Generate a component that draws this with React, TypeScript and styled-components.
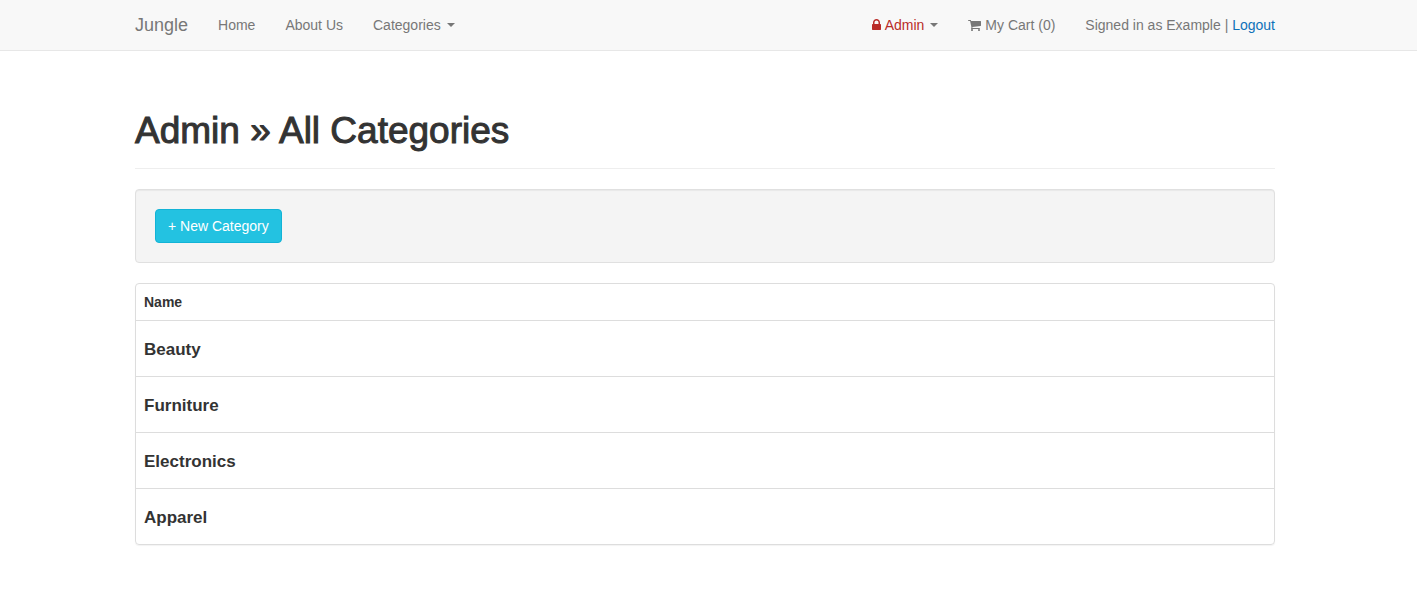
import React from "react";
import styled, { createGlobalStyle } from "styled-components";

const GlobalStyle = createGlobalStyle`
  *, *::before, *::after { box-sizing: border-box; }
  body {
    margin: 0;
    background: #fff;
    color: #333;
    font: 14px/20px "Liberation Sans", Arial, sans-serif;
  }
`;

const Navbar = styled.header`
  padding-right: 7px;
  background: #f8f8f8;
  border-bottom: 1px solid #e7e7e7;
`;

const Container = styled.div`
  max-width: 1170px;
  margin: 0 auto;
  padding: 0 15px;
`;

const NavRow = styled(Container)`
  display: flex;
  align-items: center;
  justify-content: space-between;
  min-height: 50px;
  color: #777;
`;

const NavGroup = styled.nav`
  display: flex;
  align-items: center;
  gap: 30px;
`;

const Brand = styled.a`
  color: #777;
  font-size: 18px;
  text-decoration: none;
`;

const NavLink = styled.a`
  display: inline-flex;
  align-items: center;
  gap: 4px;
  color: #777;
  text-decoration: none;
`;

const NavToggle = styled.button<{ $danger?: boolean }>`
  display: inline-flex;
  align-items: center;
  gap: 4px;
  padding: 0;
  border: 0;
  background: none;
  color: ${(p) => (p.$danger ? "#b92c28" : "#777")};
  font: inherit;
  cursor: pointer;
`;

const Caret = styled.span`
  margin-left: 2px;
  border-top: 4px solid #777;
  border-left: 4px solid transparent;
  border-right: 4px solid transparent;
`;

const Account = styled.p`
  margin: 0;
`;

const AccountLink = styled.a`
  color: #0e71b8;
  text-decoration: none;
`;

const Icon = styled.svg`
  display: block;
  height: 14px;
  fill: currentColor;
`;

const Page = styled.main`
  padding: 60px 7px 48px 0;
`;

const PageHeader = styled.div`
  padding-bottom: 17px;
  margin-bottom: 20px;
  border-bottom: 1px solid #eee;
`;

const Title = styled.h1`
  margin: 0;
  font-size: 37px;
  line-height: 40px;
  font-weight: 400;
  -webkit-text-stroke: 1px currentColor;
`;

const Well = styled.section`
  padding: 19px;
  margin-bottom: 20px;
  background: #f4f4f4;
  border: 1px solid #e0e0e0;
  border-radius: 4px;
  box-shadow: inset 0 1px 1px rgba(0, 0, 0, 0.05);
`;

const PrimaryLink = styled.a`
  display: inline-block;
  padding: 6px 12px;
  vertical-align: top;
  color: #fff;
  background: #23c2e1;
  border: 1px solid #12b3d6;
  border-radius: 4px;
  text-decoration: none;
`;

const Panel = styled.section`
  border: 1px solid #ddd;
  border-radius: 4px;
  box-shadow: 0 1px 1px rgba(0, 0, 0, 0.05);
`;

const Table = styled.table`
  width: 100%;
  border-spacing: 0;
`;

const HeadCell = styled.th`
  padding: 8px;
  text-align: left;
`;

const Cell = styled.td`
  padding: 18px 8px 16px;
  border-top: 1px solid #ddd;
`;

const CategoryName = styled.h4`
  margin: 0;
  font-size: 17px;
  line-height: 21px;
  font-weight: 700;
`;

const categories = ["Beauty", "Furniture", "Electronics", "Apparel"];

function LockIcon() {
  return (
    <Icon viewBox="320 0 1152 1792" width="9" aria-hidden="true">
      <path d="M640 768h512v-192q0-106-75-181t-181-75-181 75-75 181v192zm832 96v576q0 40-28 68t-68 28h-960q-40 0-68-28t-28-68v-576q0-40 28-68t68-28h32v-192q0-184 132-316t316-132 316 132 132 316v192h32q40 0 68 28t28 68z" />
    </Icon>
  );
}

function CartIcon() {
  return (
    <Icon viewBox="64 0 1664 1792" width="13" aria-hidden="true">
      <path d="M704 1536q0 52-38 90t-90 38-90-38-38-90 38-90 90-38 90 38 38 90zm896 0q0 52-38 90t-90 38-90-38-38-90 38-90 90-38 90 38 38 90zm128-1088v512q0 24-16.5 42.5t-40.5 21.5l-1044 122q13 60 13 70 0 16-24 64h920q26 0 45 19t19 45-19 45-45 19h-1024q-26 0-45-19t-19-45q0-11 8-31.5t16-36 21.5-40 15.5-29.5l-177-823h-204q-26 0-45-19t-19-45 19-45 45-19h256q16 0 28.5 6.5t19.5 15.5 13 24.5 8 26 5.5 29.5 4.5 26h1201q26 0 45 19t19 45z" />
    </Icon>
  );
}

export default function App() {
  return (
    <>
      <GlobalStyle />
      <Navbar>
        <NavRow>
          <NavGroup aria-label="Main">
            <Brand href="#">Jungle</Brand>
            <NavLink href="#">Home</NavLink>
            <NavLink href="#">About Us</NavLink>
            <NavToggle type="button" aria-haspopup="true">
              Categories
              <Caret />
            </NavToggle>
          </NavGroup>
          <NavGroup aria-label="Account">
            <NavToggle type="button" aria-haspopup="true" $danger>
              <LockIcon />
              Admin
              <Caret />
            </NavToggle>
            <NavLink href="#">
              <CartIcon />
              My Cart (0)
            </NavLink>
            <Account>
              Signed in as Example | <AccountLink href="#">Logout</AccountLink>
            </Account>
          </NavGroup>
        </NavRow>
      </Navbar>
      <Page>
        <Container>
          <PageHeader>
            <Title>Admin » All Categories</Title>
          </PageHeader>
          <Well>
            <PrimaryLink href="#">+ New Category</PrimaryLink>
          </Well>
          <Panel>
            <Table>
              <thead>
                <tr>
                  <HeadCell scope="col">Name</HeadCell>
                </tr>
              </thead>
              <tbody>
                {categories.map((name) => (
                  <tr key={name}>
                    <Cell>
                      <CategoryName>{name}</CategoryName>
                    </Cell>
                  </tr>
                ))}
              </tbody>
            </Table>
          </Panel>
        </Container>
      </Page>
    </>
  );
}
